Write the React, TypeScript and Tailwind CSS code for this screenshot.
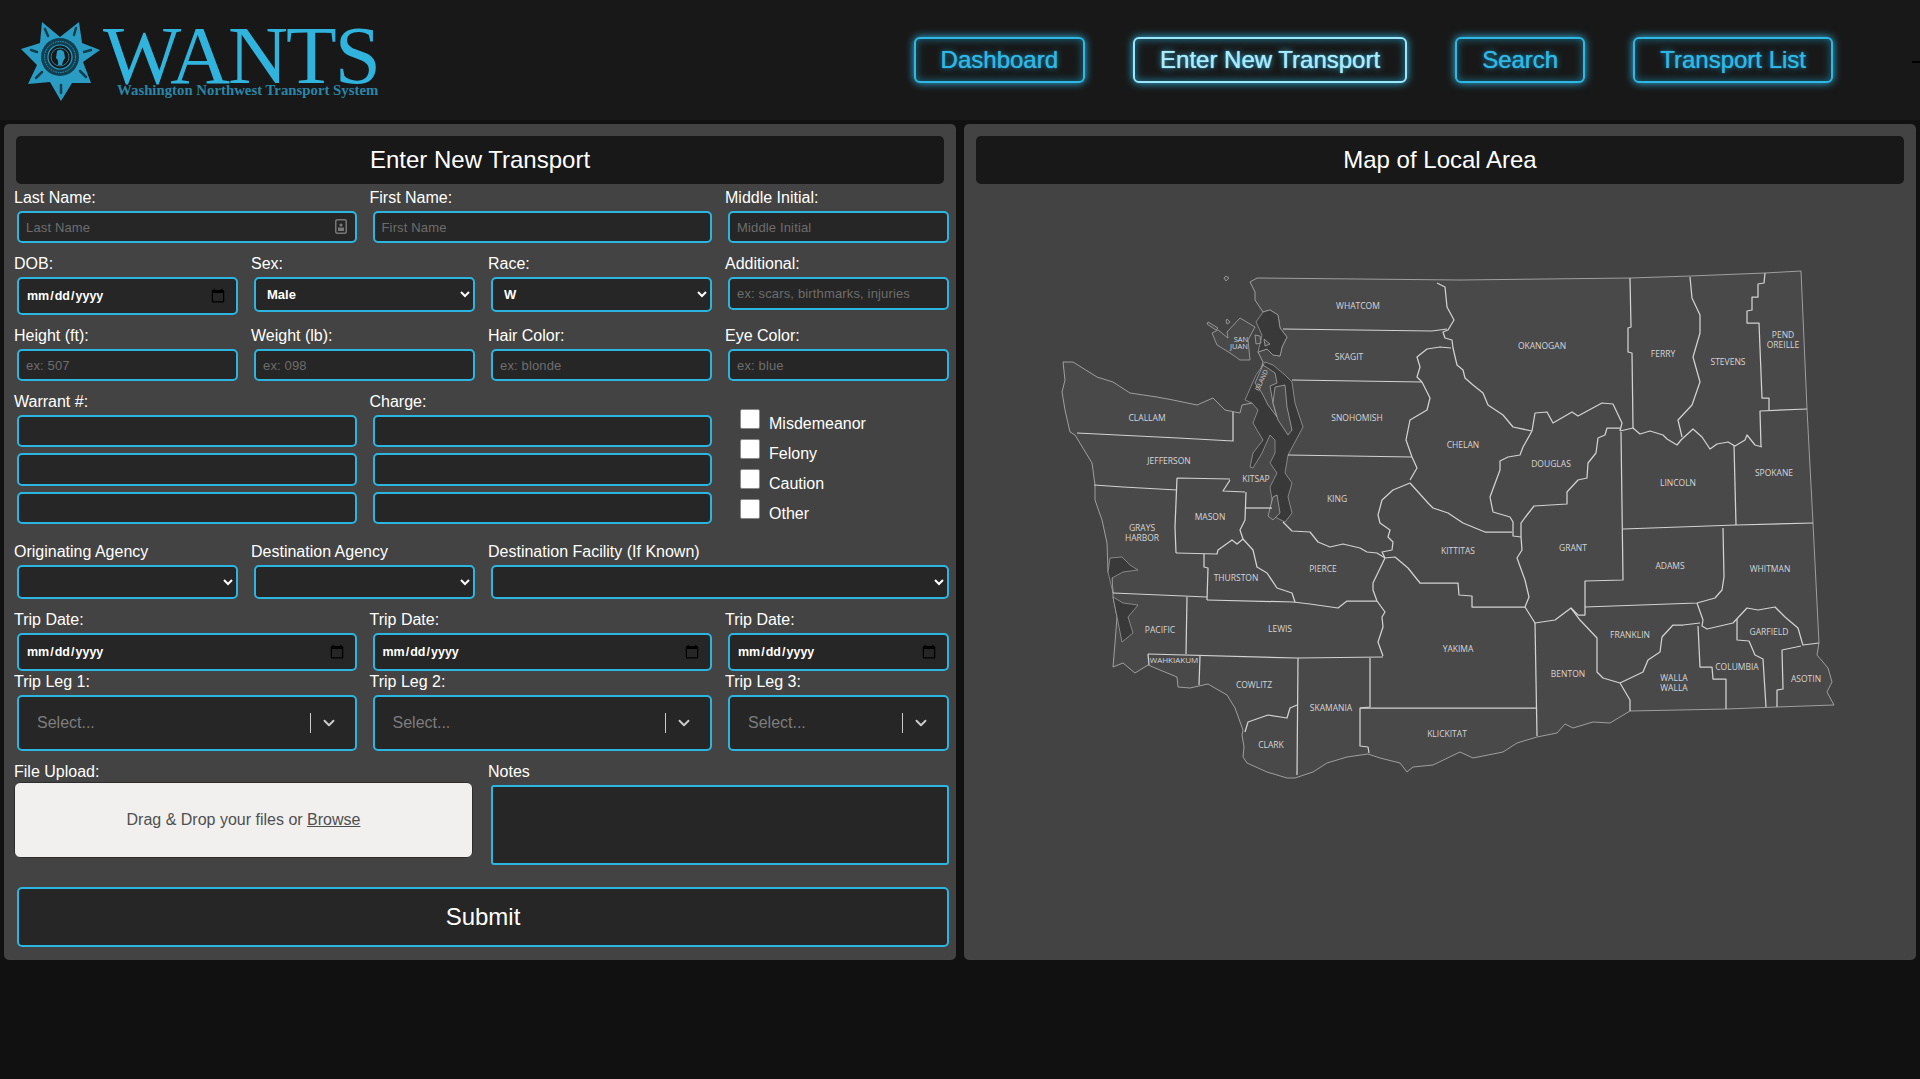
import { ChevronDown } from "lucide-react";

const inputClass =
  "w-full bg-[#262626] border-2 border-[#2cb5e0] rounded-[5px] px-[7px] text-[13px] tracking-[0.15px] text-white outline-none placeholder:text-[#6d6d6d]";
const selectClass =
  "w-full bg-[#262626] border-2 border-[#2cb5e0] rounded-[5px] pl-[7px] text-[13px] font-semibold text-white outline-none";
const dateClass =
  "w-full h-[38px] bg-[#262626] border-2 border-[#2cb5e0] rounded-[5px] pl-[7px] pr-[10px] text-[12.5px] font-semibold text-white outline-none [&::-webkit-calendar-picker-indicator]:w-[16px] [&::-webkit-calendar-picker-indicator]:h-[16px] [&::-webkit-calendar-picker-indicator]:p-0";

const navItems = [
  { label: "Dashboard", active: false },
  { label: "Enter New Transport", active: true },
  { label: "Search", active: false },
  { label: "Transport List", active: false },
];

// outline of the state, in page coordinates
const land =
  "M1063,362 L1073,362 1097,377 1113,382 1130,393 1157,397 1173,400 1197,405 1213,398 1225,410 1235,412 1240,413 1242,405 1252,403 1263,362 1258,352 1267,349 1273,355 1280,356 1282,347 1287,337 1280,328 1278,315 1270,310 1263,312 1255,300 1255,292 1250,282 1257,278 1460,280 1630,278 1690,276 1765,273 1801,271 1807,409 1813,523 1819,643 1817,655 1828,668 1832,682 1827,692 1834,705 1777,707 1727,709 1630,711 1620,717 1610,723 1593,722 1573,728 1565,724 1557,733 1537,737 1517,743 1503,752 1473,758 1460,752 1433,765 1413,767 1407,772 1400,763 1380,758 1368,754 1347,757 1327,763 1313,772 1295,778 1287,778 1267,772 1247,763 1243,757 1244,747 1242,735 1243,730 1235,708 1227,695 1208,684 1190,688 1178,687 1177,677 1160,670 1148,665 1135,673 1123,663 1113,667 1115,643 1117,617 1113,597 1113,593 1112,578 1108,572 1107,543 1102,520 1095,500 1095,485 1092,463 1075,435 1070,432 1065,410 1062,392 1065,380 Z";

const water = [
  "M1245,400 L1256,375 1265,362 1273,365 1285,375 1292,382 1295,403 1303,427 1288,455 1285,473 1292,483 1288,497 1292,513 1285,522 1275,517 1270,510 1272,500 1270,487 1277,473 1270,463 1275,453 1275,440 1270,435 1262,453 1253,468 1250,467 1253,453 1263,440 1257,430 1253,423 1258,410 1252,403 Z",
  "M1263,312 L1270,310 1278,315 1280,328 1287,337 1282,347 1280,356 1273,355 1267,349 1258,352 1262,335 1256,322 Z",
  "M1113,593 L1112,578 1123,572 1138,570 1130,565 1122,557 1110,558 1108,572 Z",
  "M1113,597 L1123,603 1138,605 1128,617 1133,633 1122,642 1117,617 Z",
];

const islands = [
  "M1227,332 L1240,318 1255,327 1248,340 1250,360 1240,360 1230,353 1217,345 1212,333 1218,330 1228,338 Z",
  "M1208,322 L1218,328 1216,330 1207,324 Z",
  "M1255,383 L1263,365 1275,373 1277,383 1270,386 1273,403 1277,417 1268,405 1262,393 Z",
  "M1275,387 L1285,385 1287,407 1292,430 1288,435 1278,420 1273,403 Z",
  "M1273,497 L1277,495 1280,513 1273,520 1268,516 Z",
  "M1255,335 L1260,336 1261,343 1256,344 Z",
  "M1264,339 L1270,344 1265,346 Z",
  "M1226,276 L1229,278 1226,281 1224,278 Z",
  "M1227,319 L1230,322 1227,324 1226,321 Z",
];

// county lines
const borders = [
  "M1283,329 L1432,331 1447,329",
  "M1437,283 L1445,287 1447,307 1454,320 1448,330 1443,332 1445,338 1452,340 1453,348 1457,365 1463,370 1465,378 1473,385 1483,393 1488,405 1503,415 1513,427 1532,431",
  "M1532,431 L1535,413 1547,412 1553,423 1572,412 1578,416 1602,403 1613,404 1622,423 1620,431",
  "M1630,278 L1631,327 1628,328 1628,352 1632,353 1633,428",
  "M1620,431 L1633,428 1640,434 1650,431 1663,435 1667,439 1677,445 1681,440 1693,429 1702,437 1710,449 1717,444 1728,442 1735,446 1745,440 1747,435 1755,445 1762,447",
  "M1690,277 L1692,298 1700,315 1700,333 1693,357 1700,382 1692,405 1678,420 1682,437",
  "M1765,273 L1764,283 1758,284 1758,297 1752,297 1752,310 1747,311 1747,323 1759,323 1762,398 1769,398 1769,410",
  "M1807,409 L1760,411 1761,447",
  "M1734,445 L1736,525",
  "M1623,529 L1736,525 1813,523",
  "M1621,432 L1623,580 1585,581 1585,615 1578,615",
  "M1723,528 L1724,577 1722,590 1715,598 1697,603 1585,607",
  "M1532,431 L1523,447 1520,455 1508,457 1500,461 1500,470 1490,497 1493,512 1510,517 1513,522 1513,536 1521,537",
  "M1620,428 L1607,428 1605,435 1598,438 1596,453 1588,463 1587,478 1578,480 1567,492 1567,504 1534,506 1527,515 1521,523 1521,537 1522,550 1517,558 1525,580 1529,597 1525,607 1535,623 1555,620 1571,608 1578,615",
  "M1571,608 L1580,620 1597,638 1597,672 1603,678 1620,683 1630,700 1630,711",
  "M1620,683 L1643,672 1648,660 1660,652 1662,637 1673,625 1683,625 1700,623",
  "M1697,603 L1703,620 1702,626 1707,629 1733,623 1747,608 1758,610 1775,607 1785,617 1798,628 1802,642 1803,645 1819,643",
  "M1737,619 L1737,640 1749,641 1755,655 1763,659 1766,707",
  "M1801,646 L1782,650 1783,689 1777,690 1777,707",
  "M1698,626 L1700,667 1712,667 1713,679 1726,679 1726,709",
  "M1535,623 L1537,736",
  "M1360,708 L1537,708",
  "M1370,658 L1370,707 1360,708 1360,746 1368,747 1369,753",
  "M1148,654 L1297,658 1383,657",
  "M1298,658 L1297,775",
  "M1297,705 L1290,708 1287,718 1268,715 1248,722 1245,732",
  "M1148,654 L1149,665",
  "M1200,656 L1199,685",
  "M1187,597 L1186,654",
  "M1113,593 L1207,597",
  "M1207,600 L1293,602 1310,604 1338,608 1347,601 1377,601",
  "M1385,558 L1373,583 1373,590 1377,601 1385,612 1382,617 1383,627 1378,642 1383,656",
  "M1283,522 L1292,531 1310,532 1318,542 1330,547 1343,544 1360,548 1367,552 1377,553 1385,558",
  "M1385,558 L1382,552 1392,550 1393,542 1388,537 1390,530 1380,523 1378,515 1382,500 1393,490 1410,483",
  "M1410,483 L1428,503 1433,508 1448,513 1463,523 1485,532 1512,532",
  "M1288,455 L1412,457",
  "M1412,457 L1417,468 1410,480 M1412,457 L1406,440 1410,420 1427,410 1430,398 1422,382",
  "M1292,380 L1422,382",
  "M1422,382 L1417,377 1420,367 1417,357 1427,349 1440,347 1451,348",
  "M1385,558 L1395,557 1408,568 1420,583 1458,583 1459,595 1472,596 1472,607 1525,607",
  "M1243,539 L1253,550 1257,567 1267,573 1277,588 1292,593 1295,602",
  "M1176,553 L1217,554 1218,550 1232,540 1237,544 1243,539 1240,530 1245,520 1246,492",
  "M1177,478 L1230,479 M1177,478 L1175,527 1176,553",
  "M1204,554 L1204,567 1208,568 1207,600",
  "M1094,485 L1123,487 1177,490",
  "M1077,433 L1178,438 1233,441 1233,412",
  "M1246,508 L1272,508",
  "M1230,480 L1223,491 1245,492",
];

const countyLabels: { name: string; x: number; y: number; size?: number; rotate?: number }[] = [
  { name: "WHATCOM", x: 1358, y: 306 },
  { name: "SKAGIT", x: 1349, y: 357 },
  { name: "SNOHOMISH", x: 1357, y: 418 },
  { name: "KING", x: 1337, y: 499 },
  { name: "SAN", x: 1241, y: 339, size: 7.5 },
  { name: "JUAN", x: 1239, y: 346, size: 7.5 },
  { name: "ISLAND", x: 1261, y: 380, size: 6.5, rotate: -65 },
  { name: "CLALLAM", x: 1147, y: 418 },
  { name: "JEFFERSON", x: 1169, y: 461 },
  { name: "KITSAP", x: 1256, y: 479 },
  { name: "MASON", x: 1210, y: 517 },
  { name: "GRAYS", x: 1142, y: 528 },
  { name: "HARBOR", x: 1142, y: 538 },
  { name: "THURSTON", x: 1236, y: 578 },
  { name: "PIERCE", x: 1323, y: 569 },
  { name: "LEWIS", x: 1280, y: 629 },
  { name: "PACIFIC", x: 1160, y: 630 },
  { name: "WAHKIAKUM", x: 1174, y: 660, size: 8 },
  { name: "COWLITZ", x: 1254, y: 685 },
  { name: "SKAMANIA", x: 1331, y: 708 },
  { name: "CLARK", x: 1271, y: 745 },
  { name: "KLICKITAT", x: 1447, y: 734 },
  { name: "YAKIMA", x: 1458, y: 649 },
  { name: "KITTITAS", x: 1458, y: 551 },
  { name: "OKANOGAN", x: 1542, y: 346 },
  { name: "FERRY", x: 1663, y: 354 },
  { name: "STEVENS", x: 1728, y: 362 },
  { name: "PEND", x: 1783, y: 335 },
  { name: "OREILLE", x: 1783, y: 345 },
  { name: "CHELAN", x: 1463, y: 445 },
  { name: "DOUGLAS", x: 1551, y: 464 },
  { name: "LINCOLN", x: 1678, y: 483 },
  { name: "SPOKANE", x: 1774, y: 473 },
  { name: "GRANT", x: 1573, y: 548 },
  { name: "ADAMS", x: 1670, y: 566 },
  { name: "WHITMAN", x: 1770, y: 569 },
  { name: "FRANKLIN", x: 1630, y: 635 },
  { name: "BENTON", x: 1568, y: 674 },
  { name: "WALLA", x: 1674, y: 678 },
  { name: "WALLA", x: 1674, y: 688 },
  { name: "COLUMBIA", x: 1737, y: 667 },
  { name: "GARFIELD", x: 1769, y: 632 },
  { name: "ASOTIN", x: 1806, y: 679 },
];

const StarBadge = () => (
  <svg viewBox="20 20 82 84" className="w-[82px] h-[84px] shrink-0">
    <polygon
      points="42,22 60,37 79,22 82,43 100,50 83,62 91,83 72,83 61,101 50,82 28,84 37,65 21,49 40,43"
      fill="#2a9cc4"
    />
    <circle cx="60" cy="57" r="19" fill="#123f50" />
    <circle cx="60" cy="57" r="15.5" fill="none" stroke="#2a9cc4" strokeWidth="1" strokeDasharray="1.5 1" />
    <circle cx="60" cy="57" r="12" fill="#181818" stroke="#2a9cc4" strokeWidth="1.2" />
    <circle cx="60" cy="57" r="9" fill="none" stroke="#2a9cc4" strokeWidth="0.8" />
    <path d="M57,51 Q61,48 64,52 L65,58 Q63,60 62,65 L58,65 Q59,60 56,58 Z" fill="#2a9cc4" />
    <path d="M45,29 L48,36 M76,28 L74,35 M91,50 L84,52 M86,77 L80,71 M61,93 L61,85 M36,78 L42,72 M31,50 L37,52" stroke="#123f50" strokeWidth="2.5" strokeLinecap="round" />
  </svg>
);

const Logo = () => (
  <div className="flex items-start pl-[20px] pt-[20px]">
    <StarBadge />
    <div className="flex flex-col ml-[2px] -mt-[1px] font-['Liberation_Serif',serif]">
      <span className="text-[83px] leading-[72px] tracking-[-2px] text-[#30b4dd] -ml-[1px]">WANTS</span>
      <span className="text-[14.8px] leading-[14px] font-bold text-[#2a86a6] ml-[13px] -mt-[8px] whitespace-nowrap">
        Washington Northwest Transport System
      </span>
    </div>
  </div>
);

const NavButton = ({ label, active }: { label: string; active: boolean }) => (
  <button
    className={
      active
        ? "h-[46px] px-[25px] border-[2.5px] border-[#9be6fb] rounded-[6px] text-[24px] leading-none text-[#a8ecff] bg-[#181818] shadow-[0_0_9px_#2fb8e6,inset_0_0_9px_#1f7f9f] [text-shadow:0_0_1px_#a8ecff,0_0_6px_#2fb8e6]"
        : "h-[46px] px-[25px] border-[2.5px] border-[#2fb8e6] rounded-[6px] text-[24px] leading-none text-[#2fb8e6] bg-[#181818] shadow-[0_0_9px_#2fb8e6,inset_0_0_9px_#1a6d88] [text-shadow:0_0_1px_#2fb8e6,0_0_6px_#1f8fb5]"
    }
  >
    {label}
  </button>
);

const Label = ({ children }: { children: string }) => (
  <label className="block h-[18px] leading-[18px] text-[16px] text-white -ml-[3px] mb-1 whitespace-nowrap">{children}</label>
);

const TextField = ({ label, placeholder, span }: { label: string; placeholder: string; span: string }) => (
  <div className={span}>
    <Label>{label}</Label>
    <input className={`${inputClass} h-[32px]`} placeholder={placeholder} />
  </div>
);

const PlainSelect = ({ label, value, span, height }: { label: string; value: string; span: string; height: string }) => (
  <div className={span}>
    <Label>{label}</Label>
    <select className={`${selectClass} ${height}`} defaultValue={value}>
      <option>{value}</option>
    </select>
  </div>
);

const DateField = ({ label, span }: { label: string; span: string }) => (
  <div className={span}>
    <Label>{label}</Label>
    <input type="date" className={dateClass} />
  </div>
);

const LegSelect = ({ label, span }: { label: string; span: string }) => (
  <div className={span}>
    <Label>{label}</Label>
    <div className="h-[56px] bg-[#262626] border-2 border-[#2cb5e0] rounded-[5px] flex items-center pl-[18px] pr-[8px]">
      <span className="flex-1 text-[16px] text-[#7d7d7d]">Select...</span>
      <span className="w-px h-[20px] bg-[#cccccc]" />
      <span className="w-[36px] flex items-center justify-center">
        <ChevronDown className="w-[18px] h-[18px] text-[#cccccc]" strokeWidth={2.5} />
      </span>
    </div>
  </div>
);

const CheckRow = ({ label }: { label: string }) => (
  <div className="flex items-start h-[30px]">
    <input type="checkbox" className="appearance-none w-[20px] h-[20px] bg-white border border-[#8a8a8a] rounded-[2px]" />
    <span className="ml-[9px] mt-[6px] text-[16px] leading-[18px] text-white">{label}</span>
  </div>
);

const WashingtonMap = () => (
  <svg viewBox="1040 250 820 540" className="block w-[820px] h-[540px] ml-[64px] mt-[66px]">
    <path d={land} fill="#49494a" stroke="#b5b5b5" strokeWidth="0.8" strokeLinejoin="round" />
    {water.map((d, i) => (
      <path key={i} d={d} fill="#39393a" stroke="#a5a5a5" strokeWidth="0.7" strokeLinejoin="round" />
    ))}
    {islands.map((d, i) => (
      <path key={i} d={d} fill="#49494a" stroke="#b5b5b5" strokeWidth="0.7" strokeLinejoin="round" />
    ))}
    {borders.map((d, i) => (
      <path key={i} d={d} fill="none" stroke="#d2d2d2" strokeWidth="1.25" strokeLinejoin="round" />
    ))}
    {countyLabels.map((c, i) => (
      <text
        key={i}
        x={c.x}
        y={c.y + 1}
        textAnchor="middle"
        dominantBaseline="middle"
        fontSize={c.size ?? 8.5}
        fontFamily="'Open Sans', sans-serif"
        fill="#d6d6d6"
        transform={c.rotate ? `rotate(${c.rotate} ${c.x} ${c.y})` : undefined}
      >
        {c.name}
      </text>
    ))}
  </svg>
);

export default function App() {
  return (
    <div className="min-h-screen bg-[#111111] font-['Liberation_Sans',Arial,sans-serif]">
      {/* Header */}
      <header className="h-[120px] bg-[#181818] flex items-start">
        <Logo />
        <nav className="ml-auto mt-[37px] flex gap-[48px]">
          {navItems.map((item) => (
            <NavButton key={item.label} {...item} />
          ))}
        </nav>
        <div className="ml-[79px] mt-[61px] w-[8px] h-[2px] bg-black" />
      </header>

      <div className="mt-[4px] px-1 grid grid-cols-2 gap-2">
        {/* Form panel */}
        <section className="h-[836px] bg-[#434343] rounded-[5px] pt-3 pl-3 pr-[7px]">
          <div className="h-[48px] mr-[5px] bg-[#181818] rounded-[5px] flex items-center justify-center text-[24px] text-white">
            Enter New Transport
          </div>

          <form className="ml-[1px] mt-[5px]">
            <div className="grid grid-cols-8 gap-x-4 items-start">
              <div className="col-span-3">
                <Label>Last Name:</Label>
                <div className="relative">
                  <input className={`${inputClass} h-[32px]`} placeholder="Last Name" />
                  <svg viewBox="0 0 12 15" className="absolute right-[10px] top-[8px] w-[12px] h-[15px]">
                    <rect x="0.75" y="0.75" width="10.5" height="13.5" rx="1.5" fill="none" stroke="#777777" strokeWidth="1.5" />
                    <circle cx="6" cy="6" r="1.6" fill="#777777" />
                    <rect x="3" y="8.5" width="6" height="3.5" fill="#777777" />
                  </svg>
                </div>
              </div>
              <TextField span="col-span-3" label="First Name:" placeholder="First Name" />
              <TextField span="col-span-2" label="Middle Initial:" placeholder="Middle Initial" />
            </div>

            <div className="grid grid-cols-8 gap-x-4 items-start mt-3">
              <DateField span="col-span-2" label="DOB:" />
              <PlainSelect span="col-span-2" label="Sex:" value="Male" height="h-[35px]" />
              <PlainSelect span="col-span-2" label="Race:" value="W" height="h-[35px]" />
              <div className="col-span-2">
                <Label>Additional:</Label>
                <input className={`${inputClass} h-[33px]`} placeholder="ex: scars, birthmarks, injuries" />
              </div>
            </div>

            <div className="grid grid-cols-8 gap-x-4 items-start mt-3">
              <TextField span="col-span-2" label="Height (ft):" placeholder="ex: 507" />
              <TextField span="col-span-2" label="Weight (lb):" placeholder="ex: 098" />
              <TextField span="col-span-2" label="Hair Color:" placeholder="ex: blonde" />
              <TextField span="col-span-2" label="Eye Color:" placeholder="ex: blue" />
            </div>

            <div className="grid grid-cols-8 gap-x-4 items-start mt-3">
              <div className="col-span-3">
                <Label>Warrant #:</Label>
                <div className="flex flex-col gap-[6px]">
                  <input className={`${inputClass} h-[32px]`} />
                  <input className={`${inputClass} h-[33px]`} />
                  <input className={`${inputClass} h-[32px]`} />
                </div>
              </div>
              <div className="col-span-3">
                <Label>Charge:</Label>
                <div className="flex flex-col gap-[6px]">
                  <input className={`${inputClass} h-[32px]`} />
                  <input className={`${inputClass} h-[33px]`} />
                  <input className={`${inputClass} h-[32px]`} />
                </div>
              </div>
              <div className="col-span-2 h-[131px] pl-[12px] pt-[16px]">
                <CheckRow label="Misdemeanor" />
                <CheckRow label="Felony" />
                <CheckRow label="Caution" />
                <CheckRow label="Other" />
              </div>
            </div>

            <div className="grid grid-cols-8 gap-x-4 items-start mt-[19px]">
              <PlainSelect span="col-span-2" label="Originating Agency" value="" height="h-[34px]" />
              <PlainSelect span="col-span-2" label="Destination Agency" value="" height="h-[34px]" />
              <PlainSelect span="col-span-4" label="Destination Facility (If Known)" value="" height="h-[34px]" />
            </div>

            <div className="grid grid-cols-8 gap-x-4 items-start mt-3">
              <DateField span="col-span-3" label="Trip Date:" />
              <DateField span="col-span-3" label="Trip Date:" />
              <DateField span="col-span-2" label="Trip Date:" />
            </div>

            <div className="grid grid-cols-8 gap-x-4 items-start mt-[2px]">
              <LegSelect span="col-span-3" label="Trip Leg 1:" />
              <LegSelect span="col-span-3" label="Trip Leg 2:" />
              <LegSelect span="col-span-2" label="Trip Leg 3:" />
            </div>

            <div className="grid grid-cols-8 gap-x-4 items-start mt-3">
              <div className="col-span-4">
                <label className="block h-[18px] leading-[18px] text-[16px] text-white -ml-[3px] mb-px">File Upload:</label>
                <div className="h-[76px] -ml-[3px] mr-[2px] bg-[#f1f0ef] border border-[#2d2d2d] rounded-[6px] flex items-center justify-center text-[16px] text-[#4f4f4f]">
                  <span>
                    Drag &amp; Drop your files or <span className="underline">Browse</span>
                  </span>
                </div>
              </div>
              <div className="col-span-4">
                <Label>Notes</Label>
                <textarea className="block w-full h-[80px] bg-[#262626] border-2 border-[#2cb5e0] rounded-[3px] outline-none resize-none" />
              </div>
            </div>

            <button
              type="button"
              className="w-full h-[60px] mt-[22px] bg-[#262626] border-2 border-[#2cb5e0] rounded-[5px] text-[24px] text-white"
            >
              Submit
            </button>
          </form>
        </section>

        {/* Map panel */}
        <section className="h-[836px] bg-[#434343] rounded-[5px] pt-3 px-3">
          <div className="h-[48px] bg-[#181818] rounded-[5px] flex items-center justify-center text-[24px] text-white">
            Map of Local Area
          </div>
          <WashingtonMap />
        </section>
      </div>
    </div>
  );
}
